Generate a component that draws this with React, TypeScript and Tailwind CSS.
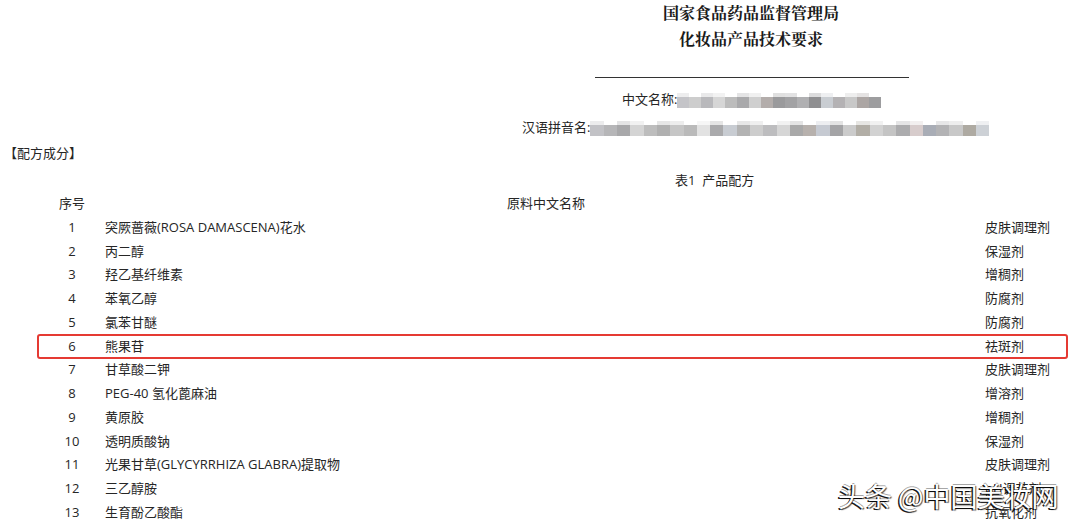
import React from 'react';

const sans = 'font-["Open_Sans","Noto_Sans_CJK_SC",sans-serif]';

// mosaic blocks that hide the product names
const cnBlocks = [
  'bg-[#c4c4c8]', 'bg-[#cdcdcd]', 'bg-[#b9b9bc]', 'bg-[#d6d6d6]', 'bg-[#bcbcbc]', 'bg-[#a9a9ab]',
  'bg-[#cfcfcf]', 'bg-[#b3adab]', 'bg-[#9a9a9c]', 'bg-[#a2a2a4]', 'bg-[#b0b0b2]', 'bg-[#8f8f91]',
  'bg-[#c9cdd2]', 'bg-[#b4b2b4]', 'bg-[#c8c8c8]', 'bg-[#aca6a4]', 'bg-[#9d9d9f]',
];

const pyBlocks = [
  'bg-[#c2c2c6]', 'bg-[#b6b6b8]', 'bg-[#a8a8aa]', 'bg-[#d4d4d4]', 'bg-[#bdbdbd]', 'bg-[#b0b0b0]',
  'bg-[#c6c6c6]', 'bg-[#bababa]', 'bg-[#e2e2e2]', 'bg-[#aaaaac]', 'bg-[#c8ccd2]', 'bg-[#b3b3b3]',
  'bg-[#cdcdcd]', 'bg-[#bdbdbf]', 'bg-[#d6d6d6]', 'bg-[#a9a9a9]', 'bg-[#b7b1ad]', 'bg-[#c6cad2]',
  'bg-[#a4a4a6]', 'bg-[#cbcbcb]', 'bg-[#b2aea6]', 'bg-[#d2d2d2]', 'bg-[#c4c4c4]', 'bg-[#acacae]',
  'bg-[#d7cccc]', 'bg-[#a9adb6]', 'bg-[#b3b3b5]', 'bg-[#c8c8c8]', 'bg-[#aeaaa2]', 'bg-[#cdd1d6]',
];

const rows: [string, string, string][] = [
  ['1', '突厥蔷薇(ROSA DAMASCENA)花水', '皮肤调理剂'],
  ['2', '丙二醇', '保湿剂'],
  ['3', '羟乙基纤维素', '增稠剂'],
  ['4', '苯氧乙醇', '防腐剂'],
  ['5', '氯苯甘醚', '防腐剂'],
  ['6', '熊果苷', '祛斑剂'],
  ['7', '甘草酸二钾', '皮肤调理剂'],
  ['8', 'PEG-40 氢化蓖麻油', '增溶剂'],
  ['9', '黄原胶', '增稠剂'],
  ['10', '透明质酸钠', '保湿剂'],
  ['11', '光果甘草(GLYCYRRHIZA GLABRA)提取物', '皮肤调理剂'],
  ['12', '三乙醇胺', 'pH调节剂'],
  ['13', '生育酚乙酸酯', '抗氧化剂'],
];

const Mosaic: React.FC<{ blocks: string[]; w: string }> = ({ blocks, w }) => (
  <div className="flex flex-col">
    <div className="flex h-[4px] opacity-30">
      {blocks.map((c, i) => (
        <div key={i} className={`${w} ${i % 3 === 1 ? 'bg-transparent' : c}`} />
      ))}
    </div>
    <div className="flex h-[11px]">
      {blocks.map((c, i) => (
        <div key={i} className={`${w} ${c}`} />
      ))}
    </div>
  </div>
);

const App: React.FC = () => {
  return (
    <div className={`relative h-[526px] w-[1080px] overflow-hidden bg-white text-[13px] text-[#262626] ${sans}`}>
      <div className='ml-[591px] w-[320px] pt-0 text-center font-["Noto_Serif_CJK_SC","Noto_Sans_CJK_SC",serif] text-[16px] font-bold leading-[26px] text-[#1a1a1a]'>
        <div>国家食品药品监督管理局</div>
        <div>化妆品产品技术要求</div>
      </div>

      <div className="ml-[595px] mt-[25px] h-px w-[314px] bg-[#333]" />

      <div className="ml-[622px] mt-[11px] flex h-[22px] items-center">
        <span>中文名称:</span>
        <Mosaic blocks={cnBlocks} w="w-[12px]" />
      </div>
      <div className="ml-[522px] mt-[6px] flex h-[22px] items-center">
        <span>汉语拼音名:</span>
        <Mosaic blocks={pyBlocks} w="w-[13.3px]" />
      </div>

      <div className="ml-[4px] mt-[3px] h-[22px] leading-[22px]">【配方成分】</div>

      <div className="ml-[675px] mt-[5px] h-[22px] leading-[22px]">表1&nbsp; 产品配方</div>

      <div className="mt-px">
        <div className="grid h-[23.75px] grid-cols-[50px_888px_1fr] items-center pl-[47px]">
          <div className="text-center">序号</div>
          <div className="pl-[410px]">原料中文名称</div>
          <div />
        </div>
        {rows.map(([n, name, use]) => (
          <div key={n} className="relative grid h-[23.75px] grid-cols-[50px_888px_1fr] items-center pl-[47px]">
            <div className="text-center">{n}</div>
            <div className="pl-2">{name}</div>
            <div>{use}</div>
            {n === '6' && (
              <div className="absolute left-[37px] top-[-1px] h-[25px] w-[1031px] rounded-[3px] border-2 border-[#e53a33]" />
            )}
          </div>
        ))}
      </div>

      <div className='absolute left-[838px] top-[478px] font-["Noto_Sans_CJK_SC",sans-serif] text-[27px] leading-[36px] text-white [text-shadow:-1.5px_1px_0_rgba(0,0,0,0.9),1px_1px_1px_rgba(0,0,0,0.7),0_-1px_0_rgba(0,0,0,0.35)]'>
        头条 @中国美妆网
      </div>
    </div>
  );
};

export default App;
